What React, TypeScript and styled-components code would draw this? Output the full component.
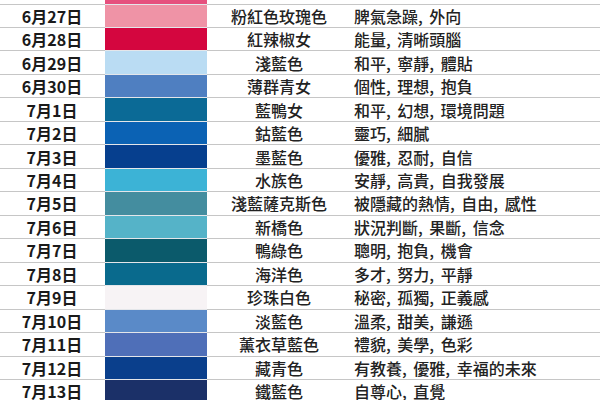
import React from 'react';
import styled, { createGlobalStyle } from 'styled-components';

type ColorRow = {
  date: string;
  color: string;
  name: string;
  traits: string;
};

const rows: ColorRow[] = [
  { date: '6月27日', color: '#ef93a6', name: '粉紅色玫瑰色', traits: '脾氣急躁, 外向' },
  { date: '6月28日', color: '#d4063f', name: '紅辣椒女', traits: '能量, 清晰頭腦' },
  { date: '6月29日', color: '#badcf3', name: '淺藍色', traits: '和平, 寧靜, 體貼' },
  { date: '6月30日', color: '#4f7fc1', name: '薄群青女', traits: '個性, 理想, 抱負' },
  { date: '7月1日', color: '#0b6a96', name: '藍鴨女', traits: '和平, 幻想, 環境問題' },
  { date: '7月2日', color: '#0b62b4', name: '鈷藍色', traits: '靈巧, 細膩' },
  { date: '7月3日', color: '#063f8e', name: '墨藍色', traits: '優雅, 忍耐, 自信' },
  { date: '7月4日', color: '#3cb3d6', name: '水族色', traits: '安靜, 高貴, 自我發展' },
  { date: '7月5日', color: '#448d9f', name: '淺藍薩克斯色', traits: '被隱藏的熱情, 自由, 感性' },
  { date: '7月6日', color: '#55b3c8', name: '新橋色', traits: '狀況判斷, 果斷, 信念' },
  { date: '7月7日', color: '#0b5a6b', name: '鴨綠色', traits: '聰明, 抱負, 機會' },
  { date: '7月8日', color: '#096a8d', name: '海洋色', traits: '多才, 努力, 平靜' },
  { date: '7月9日', color: '#f7f3f5', name: '珍珠白色', traits: '秘密, 孤獨, 正義感' },
  { date: '7月10日', color: '#5a8ac8', name: '淡藍色', traits: '溫柔, 甜美, 謙遜' },
  { date: '7月11日', color: '#4f6fb8', name: '薰衣草藍色', traits: '禮貌, 美學, 色彩' },
  { date: '7月12日', color: '#0a3f8c', name: '藏青色', traits: '有教養, 優雅, 幸福的未來' },
  { date: '7月13日', color: '#1b3068', name: '鐵藍色', traits: '自尊心, 直覺' },
];

const GlobalStyle = createGlobalStyle`
  html, body {
    margin: 0;
    padding: 0;
    background: #ffffff;
  }
  body {
    font-family: "Noto Sans CJK TC", "Noto Sans", sans-serif;
    color: #1e1e1e;
  }
`;

const Page = styled.div`
  width: 600px;
  height: 400px;
  overflow: hidden;
  background: #ffffff;
`;

const Table = styled.div`
  display: flex;
  flex-direction: column;
`;

const Row = styled.div<{ $height: number }>`
  display: grid;
  grid-template-columns: 105px 102px 144px 1fr;
  height: ${(p) => p.$height}px;
`;

const Cell = styled.div<{ $align?: 'center' | 'left' }>`
  display: flex;
  align-items: center;
  justify-content: ${(p) => (p.$align === 'left' ? 'flex-start' : 'center')};
  padding-left: ${(p) => (p.$align === 'left' ? '3px' : '0')};
  border-bottom: 1px solid #c6c6c6;
  font-size: 16px;
  line-height: 1;
  white-space: nowrap;
  overflow: hidden;
`;

const DateCell = styled(Cell)`
  font-weight: 700;
  color: #1a1a1a;
  padding-right: 1px;
`;

const NameCell = styled(Cell)`
  font-weight: 500;
  color: #222222;
`;

const TraitsCell = styled(Cell)`
  font-weight: 500;
  color: #222222;
  word-spacing: 3px;
`;

const Swatch = styled.div<{ $color: string }>`
  background: ${(p) => p.$color};
  border-bottom: 1px solid #e4e6ea;
`;

const ROW_HEIGHT = 23.47;

export default function App() {
  return (
    <Page>
      <GlobalStyle />
      <Table>
        <Row $height={4.5}>
          <Cell />
          <Swatch $color="#e6507e" />
          <Cell />
          <Cell />
        </Row>
        {rows.map((row) => (
          <Row key={row.date} $height={ROW_HEIGHT}>
            <DateCell>{row.date}</DateCell>
            <Swatch $color={row.color} />
            <NameCell>{row.name}</NameCell>
            <TraitsCell $align="left">{row.traits}</TraitsCell>
          </Row>
        ))}
      </Table>
    </Page>
  );
}
